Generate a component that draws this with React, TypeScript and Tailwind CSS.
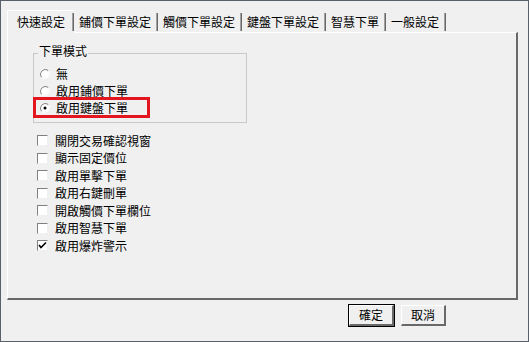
import React from "react";

const font = { fontFamily: '"Noto Sans CJK TC", "Noto Sans", sans-serif' };

function Radio({ checked }: { checked?: boolean }) {
  return (
    <svg width="10" height="10" viewBox="0 0 10 10" className="shrink-0">
      <path d="M8.5 1.5 A5 5 0 0 0 1.5 8.5" stroke="#808080" fill="none" strokeWidth="1" />
      <path d="M1.5 8.5 A5 5 0 0 0 8.5 1.5" stroke="#ffffff" fill="none" strokeWidth="1" />
      <circle cx="5" cy="5" r="3.6" fill="#ffffff" />
      {checked && <circle cx="5" cy="5" r="1.5" fill="#000" />}
    </svg>
  );
}

function Check({ checked }: { checked?: boolean }) {
  return (
    <div className="w-[11px] h-[11px] shrink-0 bg-white border-t border-l border-t-[#808080] border-l-[#808080] border-b border-r border-b-[#f0f0f0] border-r-[#f0f0f0] flex items-center justify-center">
      {checked && (
        <svg width="9" height="9" viewBox="0 0 9 9">
          <path d="M1 4 L3 6.5 L8 1.5" stroke="#000" strokeWidth="1.6" fill="none" />
        </svg>
      )}
    </div>
  );
}

const tabs = ["快速設定", "鋪價下單設定", "觸價下單設定", "鍵盤下單設定", "智慧下單", "一般設定"];
const checks = ["關閉交易確認視窗", "顯示固定價位", "啟用單擊下單", "啟用右鍵刪單", "開啟觸價下單欄位", "啟用智慧下單", "啟用爆炸警示"];

export default function App() {
  return (
    <div className="w-[529px] h-[342px] bg-[#f0f0f0] border border-[#59606a] overflow-hidden text-[12px] text-black flex flex-col" style={font}>
      <div className="pl-[6px] pr-[10px] pt-[8px] flex flex-col">
        <div className="flex items-end h-[23px]">
          {tabs.map((t, i) => (
            <div
              key={t}
              className={
                i === 0
                  ? "h-[23px] pl-[9px] flex items-center border-t border-l border-t-white border-l-white bg-[#f0f0f0] relative z-10 -mb-px"
                  : "h-[20px] pl-[5px] flex items-center"
              }
            >
              <span className="leading-none">{t}</span>
              <span className={(i === 0 ? "ml-[7px]" : "ml-[5px]") + " w-[2px] h-[18px] border-l border-[#a0a0a0] border-r border-r-[#696969]"} />
            </div>
          ))}
        </div>
        <div className="h-[268px] border-t border-l border-t-white border-l-white border-r-2 border-b-2 border-r-[#696969] border-b-[#696969] pl-[25px] pt-[20px]">
          <div className="w-[214px] h-[70px] border border-[#c8c8c8] relative pl-[6px] pt-[13px] flex flex-col gap-[4px]">
            <span className="absolute -top-[9px] left-[4px] px-[1px] bg-[#f0f0f0] leading-none">下單模式</span>
            <div className="flex items-center gap-[6px] h-[13px]"><Radio /><span className="leading-none">無</span></div>
            <div className="flex items-center gap-[6px] h-[13px]"><Radio /><span className="leading-none">啟用鋪價下單</span></div>
            <div className="flex items-center gap-[6px] h-[13px] relative">
              <div className="absolute -left-[7px] -top-[4px] w-[117px] h-[21px] border-[3px] border-[#e3161f]" />
              <Radio checked /><span className="leading-none">啟用鍵盤下單</span>
            </div>
          </div>
          <div className="flex flex-col gap-[4.5px] mt-[11px] pl-[4px]">
            {checks.map((c, i) => (
              <div key={c} className="flex items-center gap-[7px] h-[13px]">
                <Check checked={i === 6} />
                <span className="leading-none">{c}</span>
              </div>
            ))}
          </div>
        </div>
      </div>
      <div className="flex justify-end gap-[7px] pr-[82px] pt-[5px]">
        {["確定", "取消"].map((b, i) => (
          <div
            key={b}
            className={
              "w-[45px] h-[21px] flex items-center justify-center border-t border-l border-t-white border-l-white border-r-2 border-b-2 border-r-[#696969] border-b-[#696969] " +
              (i === 0 ? "outline outline-1 outline-black" : "")
            }
          >
            <span className="leading-none">{b}</span>
          </div>
        ))}
      </div>
    </div>
  );
}
